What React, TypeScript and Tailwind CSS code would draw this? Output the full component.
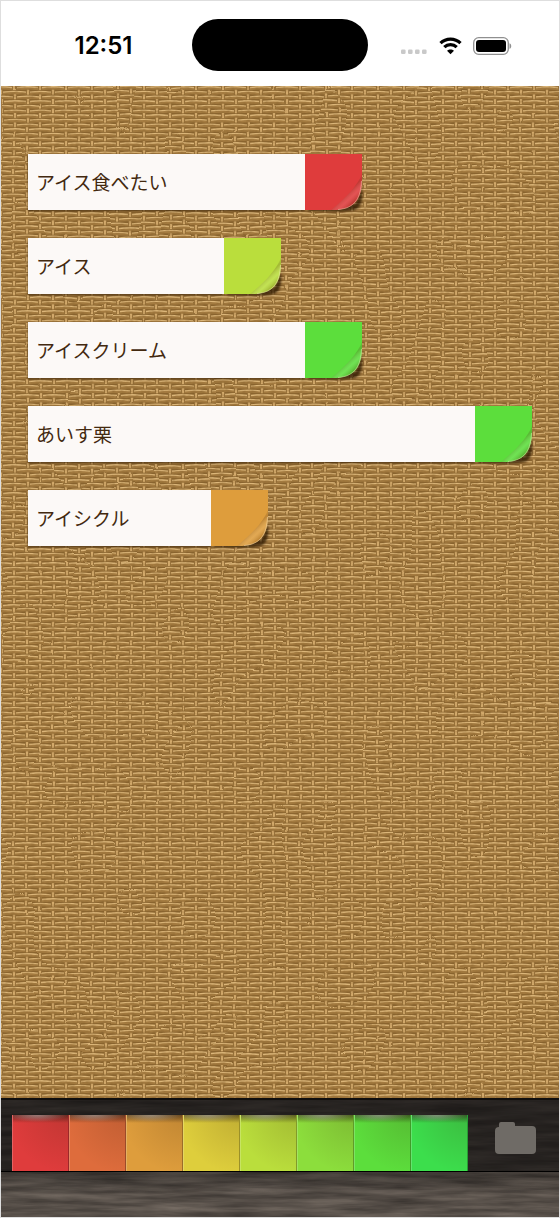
type Note = { id: number; text: string; color: string; width: string };

const notes: Note[] = [
  { id: 1, text: "アイス食べたい", color: "#df3c3c", width: "w-[334px]" },
  { id: 2, text: "アイス", color: "#bade3c", width: "w-[253px]" },
  { id: 3, text: "アイスクリーム", color: "#5cde3c", width: "w-[334px]" },
  { id: 4, text: "あいす栗", color: "#5cde3c", width: "w-[504px]" },
  { id: 5, text: "アイシクル", color: "#de9d3c", width: "w-[240px]" },
];

const swatches = [
  { name: "Red", bg: "bg-[#df3c3c]" },
  { name: "Orange", bg: "bg-[#de6c3c]" },
  { name: "Amber", bg: "bg-[#de9d3c]" },
  { name: "Yellow", bg: "bg-[#dece3c]" },
  { name: "Lime", bg: "bg-[#bade3c]" },
  { name: "Light green", bg: "bg-[#8cde3c]" },
  { name: "Green", bg: "bg-[#5cde3c]" },
  { name: "Emerald", bg: "bg-[#3cde4c]" },
];

// One strand of the wicker, drawn around its own centre
function Strand({ x, y }: { x: number; y: number }) {
  return (
    <g transform={`translate(${x} ${y})`}>
      <path d="M-11 .5 Q0 -1 11 .5 L11 3 Q0 2 -11 3Z" fill="#a47b40" />
      <path d="M-11 .5 Q0 -1 11 .5" fill="none" stroke="#dcb679" strokeWidth="1.4" />
    </g>
  );
}

function Wicker() {
  const rows = [0, 1, 2, 3, 4, 5, 6];
  return (
    <svg className="absolute inset-0 h-full w-full" aria-hidden="true">
      <defs>
        <pattern id="weave" width="52" height="28" patternUnits="userSpaceOnUse">
          <rect width="52" height="28" fill="#8b652f" />
          {rows.map((r) =>
            (r % 2 ? [13, 39] : [0, 26, 52]).map((x) => (
              <Strand key={`${r}-${x}`} x={x} y={r * 4.667 + 1} />
            ))
          )}
          {rows.map((r) =>
            (r % 2 ? [0, 26, 52] : [13, 39]).map((x) => (
              <rect key={`${r}-${x}`} x={x - 1.2} y={r * 4.667 - 1} width="2.4" height="5" fill="#d2a96b" />
            ))
          )}
        </pattern>
        <filter id="fibre" x="0" y="0" width="100%" height="100%" colorInterpolationFilters="sRGB">
          <feTurbulence type="fractalNoise" baseFrequency="0.2 0.4" numOctaves="2" seed="4" />
          <feColorMatrix values="0 0 0 0 .5  0 0 0 0 .36  0 0 0 0 .16  .7 0 0 0 -.25" />
        </filter>
        {/* Slight waviness so the rows don't look ruled */}
        <filter id="wave" x="0" y="0" width="100%" height="100%" colorInterpolationFilters="sRGB">
          <feTurbulence type="fractalNoise" baseFrequency="0.02 0.015" numOctaves="1" seed="9" />
          <feDisplacementMap in="SourceGraphic" scale="4" xChannelSelector="R" yChannelSelector="G" />
        </filter>
      </defs>
      <rect width="100%" height="100%" fill="#a67c42" />
      <rect width="100%" height="100%" fill="url(#weave)" filter="url(#wave)" />
      <rect width="100%" height="100%" filter="url(#fibre)" />
    </svg>
  );
}

function Wood() {
  return (
    <svg className="absolute inset-0 h-full w-full" aria-hidden="true">
      <defs>
        <filter id="grain" x="0" y="0" width="100%" height="100%" colorInterpolationFilters="sRGB">
          <feTurbulence type="fractalNoise" baseFrequency="0.014 0.16" numOctaves="4" seed="11" />
          <feColorMatrix values=".28 0 0 0 .2  .26 0 0 0 .18  .24 0 0 0 .165  0 0 0 0 1" />
        </filter>
      </defs>
      <rect width="100%" height="100%" filter="url(#grain)" />
    </svg>
  );
}

function Tab({ id, color }: { id: number; color: string }) {
  return (
    <svg width="57" height="56" viewBox="0 0 57 56" className="shrink-0 overflow-visible" aria-hidden="true">
      <defs>
        <linearGradient id={`curl-${id}`} gradientUnits="userSpaceOnUse" x1="38" y1="34" x2="50" y2="47">
          <stop offset="0" stopColor="#503018" stopOpacity="0" />
          <stop offset=".35" stopColor="#503018" stopOpacity=".22" />
          <stop offset=".7" stopColor="#fff" stopOpacity=".12" />
          <stop offset="1" stopColor="#503018" stopOpacity=".2" />
        </linearGradient>
        <filter id={`soft-${id}`} x="-20%" y="-20%" width="140%" height="150%">
          <feGaussianBlur stdDeviation="1.2" />
        </filter>
      </defs>
      <path d="M3 50H50L57 34C58 44 57 51 52 55C44 59 20 57 3 57Z" fill="#2a1803" opacity=".75" filter={`url(#soft-${id})`} />
      <path d="M0 0H57V25C57 43 51 55 31 56H0Z" fill={color} />
      <path d="M57 20C52 32 42 43 26 56H31C51 55 57 43 57 25Z" fill={`url(#curl-${id})`} />
      <path d="M56.5 27C56 43 50 54.5 33 55.5" fill="none" stroke="#fff0d0" strokeOpacity=".4" />
    </svg>
  );
}

function NoteRow({ note }: { note: Note }) {
  return (
    <li className={`flex h-14 max-w-full ${note.width}`}>
      <div className="flex min-w-0 flex-1 items-center bg-[#fcf9f7] px-2 shadow-[0_1px_2px_rgba(50,28,4,0.75)]">
        <span className="truncate text-[19px] leading-7 text-[#43290f]">{note.text}</span>
      </div>
      <Tab id={note.id} color={note.color} />
    </li>
  );
}

function StatusBar() {
  return (
    <header className="grid h-[85px] grid-cols-[1fr_176px_1fr] items-center bg-white text-black">
      <time className="pt-1 pl-[14px] text-center font-[Inter,sans-serif] text-[24px] leading-7 font-semibold">12:51</time>
      <div className="mt-[3px] h-[52px] rounded-full bg-black" />
      <div className="flex items-center justify-center gap-[11px] pt-1 pr-4">
        <svg width="28" height="18" viewBox="0 0 28 18" aria-label="No signal">
          {[0, 7, 14, 21].map((x) => (
            <rect key={x} x={x + 1} y="12.5" width="4.6" height="4.6" rx="1.3" fill="#c9c9c9" />
          ))}
        </svg>
        <svg width="23" height="18" viewBox="0 0 23 18" fill="none" stroke="#000" aria-label="Wi-Fi">
          <path d="M1.5 6.2C7 .7 16 .7 21.5 6.2" strokeWidth="3.2" />
          <path d="M5.3 10.1C8.7 6.7 14.3 6.7 17.7 10.1" strokeWidth="3.2" />
          <path d="M11.5 17.3L8 13.8C10 11.9 13 11.9 15 13.8Z" fill="#000" stroke="none" />
        </svg>
        <svg width="39" height="18" viewBox="0 0 39 18" aria-label="Battery full">
          <rect x=".7" y=".7" width="34.6" height="16.6" rx="5" fill="none" stroke="#8f8f8f" strokeWidth="1.3" />
          <rect x="3" y="3" width="30" height="12" rx="3" />
          <path d="M36.5 6.2C38.800 7 38.800 11 36.5 11.8Z" fill="#8f8f8f" />
        </svg>
      </div>
    </header>
  );
}

export default function App() {
  return (
    <div className="flex min-h-screen flex-col border border-[#dedede] font-['Noto_Sans_CJK_JP',sans-serif]">
      <StatusBar />

      <main className="relative flex-1">
        <Wicker />
        <ul className="relative flex flex-col gap-7 px-[27px] pt-[68px] pb-10">
          {notes.map((note) => (
            <NoteRow key={note.id} note={note} />
          ))}
        </ul>
      </main>

      <footer className="relative border-t-2 border-[#100e0d]">
        <Wood />
        <div className="relative flex h-[72px] items-start justify-between border-b border-black bg-[#0c0b0b]/65 pt-[15px] pr-[23px] pl-[11px]">
          <div className="flex" role="group" aria-label="Label color">
            {swatches.map((s) => (
              <button
                key={s.name}
                type="button"
                aria-label={s.name}
                className={`h-14 w-[57px] border-r border-black/30 ${s.bg}`}
              >
                <span className="block h-full border-l border-white/20 bg-[radial-gradient(ellipse_at_45%_0%,rgba(190,190,190,0.6),transparent_70%),linear-gradient(to_bottom,rgba(40,30,20,0.6),transparent)] bg-[length:100%_7px,100%_8px] bg-no-repeat">
                  <span className="block h-full bg-[radial-gradient(circle_at_100%_0%,rgba(60,30,10,0.18),transparent_75%)]" />
                </span>
              </button>
            ))}
          </div>
          <button type="button" aria-label="Folder" className="pt-[7px]">
            <svg width="41" height="32" viewBox="0 0 41 32" fill="#6f6b66">
              <path d="M4 5V2Q4 0 6 0H18Q20 0 20 2V4H37Q41 4 41 8V28Q41 32 37 32H4Q0 32 0 28V9Q0 5 4 5Z" />
            </svg>
          </button>
        </div>
        <div className="relative h-[45px] bg-gradient-to-b from-black/30 via-transparent to-transparent" />
      </footer>
    </div>
  );
}
